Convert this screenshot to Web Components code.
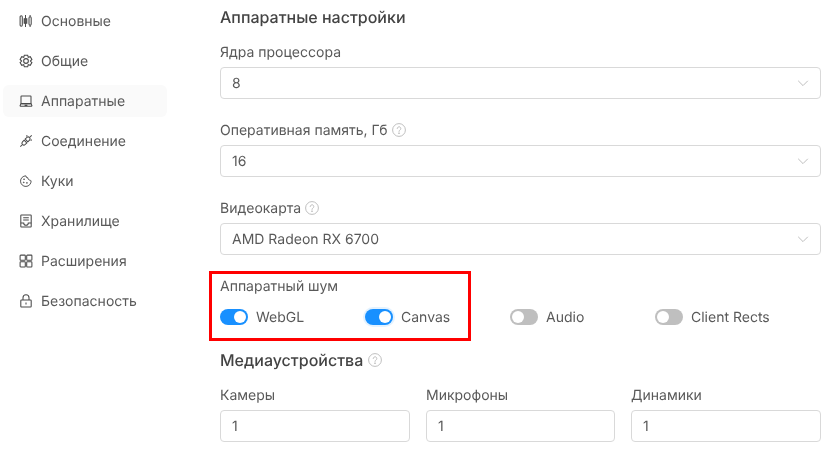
<!DOCTYPE html>
<html lang="ru"><head><meta charset="utf-8"><title>Аппаратные</title>
<style>
html,body{margin:0;height:449px;overflow:hidden;background:#fff;font-family:Inter,"Liberation Sans",sans-serif;color:#595959;text-rendering:geometricPrecision}
app-page{display:flex}
</style></head><body>
<app-page>
  <side-nav slot="nav">
    <nav-item icon="sliders">Основные</nav-item>
    <nav-item icon="gear">Общие</nav-item>
    <nav-item icon="laptop" active>Аппаратные</nav-item>
    <nav-item icon="plug">Соединение</nav-item>
    <nav-item icon="cookie">Куки</nav-item>
    <nav-item icon="storage">Хранилище</nav-item>
    <nav-item icon="grid">Расширения</nav-item>
    <nav-item icon="lock">Безопасность</nav-item>
  </side-nav>
  <main-panel>
    <section-title>Аппаратные настройки</section-title>
    <form-field label="Ядра процессора"><select-box>8</select-box></form-field>
    <form-field label="Оперативная память, Гб" help><select-box>16</select-box></form-field>
    <form-field label="Видеокарта" help><select-box>AMD Radeon RX 6700</select-box></form-field>
    <noise-group label="Аппаратный шум">
      <toggle-switch on>WebGL</toggle-switch>
      <toggle-switch on glow>Canvas</toggle-switch>
      <toggle-switch>Audio</toggle-switch>
      <toggle-switch>Client Rects</toggle-switch>
    </noise-group>
    <section-title help class="media">Медиаустройства</section-title>
    <three-cols>
      <form-field label="Камеры" flush><text-box>1</text-box></form-field>
      <form-field label="Микрофоны" flush><text-box>1</text-box></form-field>
      <form-field label="Динамики" flush><text-box>1</text-box></form-field>
    </three-cols>
  </main-panel>
</app-page>
<script>
const TX='.x{display:inline-block;will-change:transform;transform:translateY(-.5px)}';
const HELP='<svg width="14" height="14" viewBox="0 0 14 14" fill="none" stroke="#bfbfbf" stroke-width="1"><circle cx="7" cy="7" r="6.400"/><path d="M5.200 5.500a1.800 1.800 0 1 1 2.700 1.600c-.6.3-.9.7-.9 1.300" stroke-linecap="round"/><circle cx="7" cy="10.200" r=".45" fill="#bfbfbf"/></svg>';
const ICONS={
sliders:'<rect x="1.100" y="1.800" width="2.200" height="10.400" rx="1.100"/><path d="M6.500 1v12"/><rect x="5.200" y="4.800" width="2.600" height="4.400" fill="#595959"/><rect x="10" y="2.800" width="2.200" height="8.400" rx="1.100"/><path d="M11.100 1v1.800M11.100 11.200V13"/>',
gear:'<g transform="translate(7 7) scale(1.18) translate(-7 -7)" stroke-width=".9"><path d="M5.600 1.200h2.800l.5 1.700 1.700-.5 1.400 2.400-1.300 1.300 1.300 1.300-1.400 2.400-1.700-.5-.5 1.700H5.600l-.5-1.700-1.700.5L2 7.400l1.300-1.300L2 4.800l1.400-2.400 1.700.5z" transform="translate(0 .9)"/><circle cx="7" cy="7" r="2"/></g>',
laptop:'<rect x="2" y="2" width="10" height="7.600" rx=".6"/><path d="M.9 12.200h12.200M.9 12.200l1.100-2.600h10l1.100 2.600M5.600 11.200h2.800"/>',
plug:'<path d="M5.100 6.200 7.800 8.900 6.200 10.500a1.900 1.900 0 0 1-2.700-2.700zM8.900 7.800 6.200 5.100 7.800 3.500a1.900 1.900 0 0 1 2.700 2.700z"/><path d="M3.500 10.500 1.300 12.700M10.500 3.500l2.200-2.200M8.300 1.300l-1 1M12.700 5.700l-1 1"/>',
cookie:'<g transform="translate(6.800 6.800) scale(.88) translate(-7 -7)"><path d="M7.200 1.400A2.200 2.200 0 0 0 9.500 3.700a2.200 2.200 0 0 0 2.500 2.500 1.800 1.800 0 0 0 1 .8A6 6 0 1 1 7.200 1.400z"/><circle cx="5" cy="5.200" r=".45" fill="#595959"/><circle cx="4.700" cy="8.800" r=".45" fill="#595959"/><circle cx="8.300" cy="9.400" r=".45" fill="#595959"/></g>',
storage:'<rect x="1.800" y="1" width="10.400" height="12" rx=".6"/><path d="M4.200 3.700h5.600M4.200 6h5.600M1.800 9h2.900a2.300 2.300 0 0 0 4.600 0h2.900"/>',
grid:'<rect x="1.100" y="1.100" width="5.200" height="5.200" rx=".7"/><rect x="7.700" y="1.100" width="5.200" height="5.200" rx=".7"/><rect x="1.100" y="7.700" width="5.200" height="5.200" rx=".7"/><rect x="7.700" y="7.700" width="5.200" height="5.200" rx=".7"/>',
lock:'<rect x="1.800" y="6" width="10.400" height="7" rx=".7"/><path d="M4 6V3.800a3 3 0 0 1 6 0V6M7 8.600v1.800"/>'
};
function def(name,css,html){
  customElements.define(name,class extends HTMLElement{
    connectedCallback(){
      if(this.shadowRoot)return;
      const r=this.attachShadow({mode:'open'});
      r.innerHTML='<style>'+TX+css+'</style>'+(typeof html==='function'?html(this):html);
    }
  });
}
def('app-page',':host{display:flex;align-items:flex-start;position:relative;width:830px;height:449px}.mark{position:absolute;left:209px;top:271px;width:262px;height:70px;box-sizing:border-box;border:3px solid #f00;pointer-events:none}','<slot name="nav"></slot><slot></slot><div class="mark"></div>');
def('side-nav',':host{display:flex;flex-direction:column;gap:8px;margin:5px 53px 0 3px;width:164px;flex:none}','<slot></slot>');
def('nav-item',':host{display:flex;align-items:center;gap:8px;height:32px;padding:0 0 0 16px;box-sizing:border-box;border-radius:6px;font-size:14px;color:#595959}:host([active]){background:#fafafa}svg{flex:none;display:block}',
 e=>'<svg width="14" height="14" viewBox="0 0 14 14" fill="none" stroke="#4a4a4a" stroke-width="1.050">'+ICONS[e.getAttribute('icon')]+'</svg><span class="x"><slot></slot></span>');
def('main-panel',':host{display:flex;flex-direction:column;width:601px;flex:none;padding-top:5px}','<slot></slot>');
def('section-title',':host{display:flex;align-items:center;gap:5px;height:24px;box-sizing:border-box;font-size:16px;font-weight:500;color:#434343;margin-bottom:12px}:host(.media){margin-top:20px}svg{display:block}',
 e=>'<span class="x"><slot></slot></span>'+(e.hasAttribute('help')?HELP:''));
def('form-field',':host{display:block;margin-bottom:20px}:host([flush]){margin-bottom:0}.l{display:flex;align-items:center;gap:4px;height:22px;box-sizing:border-box;font-size:14px;margin-bottom:4px;color:#595959}svg{display:block}',
 e=>'<div class="l"><span class="x">'+e.getAttribute('label')+'</span>'+(e.hasAttribute('help')?HELP:'')+'</div><slot></slot>');
const box=':host{display:flex;align-items:center;justify-content:space-between;box-sizing:border-box;height:32px;padding:0 11px;border:1px solid #d9d9d9;border-radius:4px;background:#fff;font-size:14px;color:#595959}svg{display:block}';
def('select-box',box,'<span class="x"><slot></slot></span><svg width="12" height="12" viewBox="0 0 12 12" fill="none" stroke="#bfbfbf" stroke-width="1"><path d="M1.200 3.800 6 8.600l4.800-4.800"/></svg>');
def('text-box',box,'<span class="x"><slot></slot></span>');
def('noise-group',':host{display:block}.l{display:flex;align-items:center;height:22px;font-size:14px;margin-bottom:9px;color:#595959}.r{display:grid;grid-template-columns:repeat(4,145px);height:22px}',
 e=>'<div class="l"><span class="x">'+e.getAttribute('label')+'</span></div><div class="r"><slot></slot></div>');
def('toggle-switch',':host{display:flex;align-items:center;gap:8px;font-size:14px;color:#595959}.t{width:28px;height:16px;border-radius:8px;background:#bfbfbf;position:relative;flex:none}.t::after{content:"";position:absolute;left:2px;top:2px;width:12px;height:12px;border-radius:50%;background:#fff}:host([on]) .t{background:#1890ff}:host([on]) .t::after{left:14px}:host([glow]) .t{box-shadow:0 0 0 2px rgba(24,144,255,.12)}',
 '<span class="t"></span><span class="x"><slot></slot></span>');
def('three-cols',':host{display:grid;grid-template-columns:190px 189px 190px;column-gap:16px}','<slot></slot>');
</script>
</body></html>
